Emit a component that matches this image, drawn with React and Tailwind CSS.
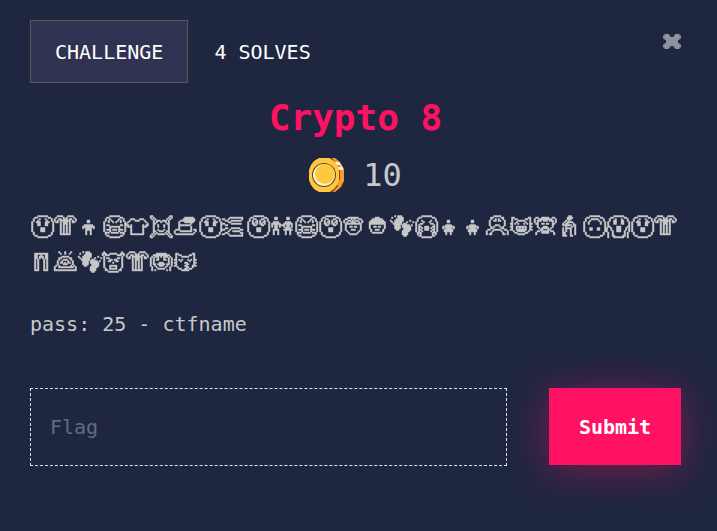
import React from "react";

const ring = [
  "................",
  ".....#######....",
  "...##.......##..",
  "..#...........#.",
  "..#...........#.",
  ".#.............#",
  ".#.............#",
  ".#.............#",
  ".#.............#",
  ".#.............#",
  ".#.............#",
  ".#.............#",
  "..#...........#.",
  "..#...........#.",
  "...##.......##..",
  ".....#######....",
];

// Places an 11x11 set of features inside the round face outline.
function face(features) {
  return ring.map((row, y) =>
    y < 3 || y > 13 || !features[y - 3]
      ? row
      : row.slice(0, 3) + features[y - 3] + row.slice(14)
  );
}

const glyphs = {
  hushed: face([
    "...#...#...",
    "..#.....#..",
    ".###...###.",
    "..##...##..",
    "..##...##..",
    "...........",
    "....###....",
    "....###....",
    "....###....",
  ]),
  astonished: face([
    "..##...##..",
    ".#..#.#..#.",
    ".#.##.#.##.",
    ".##.#.##.#.",
    "..##...##..",
    "...........",
    "....###....",
    "....###....",
    "....###....",
  ]),
  mask: face([
    "..#.....#..",
    ".#.#...#.#.",
    ".#..#.#..#.",
    "...........",
    "##.......##",
    "..#######..",
    "..#.....#..",
    "###.###.###",
    "..#.....#..",
    "##.#####.##",
  ]),
  sob: face([
    "...........",
    "..#.....#..",
    "...#...#...",
    ".##.....##.",
    "#.........#",
    "##..###..##",
    "#.#.###.#.#",
    "##..###..##",
    "#.#.....#.#",
    "##.......##",
    ".#.......#.",
  ]),
  upside: face([
    "...#####...",
    "..#.....#..",
    ".#.......#.",
    ".#.......#.",
    "...........",
    "...........",
    "..##...##..",
    "..##...##..",
  ]),
  scream: [
    "................",
    ".....#######....",
    "...##.......##..",
    "..#...#...#...#.",
    "..#..##...##..#.",
    ".#...##...##...#",
    ".#...##...##...#",
    ".#.............#",
    ".##....###....##",
    "#..#...###...#.#",
    "#..#...###...#.#",
    "#...#..###..#..#",
    ".#..#.......#.#.",
    ".#..#.......#.#.",
    ".#..##.....##.#.",
    ".#...#######..#.",
  ],
  palm: [
    "................",
    "..####...####...",
    ".#....#.#....#..",
    "#..##.###.##..#.",
    "#.#.#######.#.#.",
    ".##.#.###.#.##..",
    "....#.###.#.....",
    "....#.#.#.#.....",
    "....#.#.#.#.....",
    "....#.#.#.#.....",
    "....#.#.#.#.....",
    "....#.#.#.#.....",
    "....#.#.#.#.....",
    "....#######.....",
  ],
  boy: [
    "", "", "", "",
    "......##........",
    "......##........",
    "................",
    "....######......",
    "...########.....",
    "...#.####.#.....",
    ".....####.......",
    ".....#..#.......",
    ".....#..#.......",
    ".....#..#.......",
  ],
  girl: [
    "", "", "", "",
    "......##........",
    "......##........",
    "................",
    ".....####.......",
    "...########.....",
    "...#.####.#.....",
    "....######......",
    "....######......",
    ".....#..#.......",
    ".....#..#.......",
  ],
  shirt: [
    "", "", "",
    "...###...###....",
    "..#...###...#...",
    ".#...........#..",
    "#.............#.",
    "##.#.......#.##.",
    ".###.......###..",
    "...#.......#....",
    "...#.......#....",
    "...#.......#....",
    "...#.......#....",
    "...#########....",
  ],
  bunny: [
    "",
    "##...........##.",
    "#.#.........#.#.",
    ".#.#.......#.#..",
    "..#.###.###.#...",
    "..#.#..#..#.#...",
    "..##.......##...",
    "..#..#...#..#...",
    "..#..#...#..#...",
    "..#.........#...",
    "..#..#...#..#...",
    "..##..###..##...",
    "..#.#.....#.#...",
    ".#.#.#####.#.#..",
    "#.#.........#.#.",
    "##...........##.",
  ],
  hat: [
    "", "",
    ".......######...",
    "......########..",
    "....##########..",
    "...#...######...",
    "...#.......#....",
    "...########.....",
    "...#.......#....",
    "...#.......#....",
    ".###.......#.##.",
    "#...########..#.",
    "#............#..",
    ".############...",
  ],
  clap: [
    "", "",
    ".....#########..",
    "##..#........#..",
    "..##..#######...",
    "....##..........",
    "##....#######...",
    "..##............",
    "................",
    "..##..######....",
    "##...#......##..",
    "....#..#####....",
    "..##........##..",
    "##..#........#..",
    ".....#########..",
  ],
  couple: [
    "", "",
    "...##......##...",
    "...##......##...",
    "................",
    "..####....####..",
    ".######..######.",
    ".#.##.####.##.#.",
    ".#.##.#..#.##.#.",
    "...##.....####..",
    "..####...######.",
    "..#..#....#..#..",
    "..#..#....#..#..",
    "..#..#....#..#..",
  ],
  turban: [
    "", "",
    "....#######.....",
    "..##..#.#..##...",
    ".#..##.#.##..#..",
    ".#.#..###..#.#..",
    "..###########...",
    "..#.........#...",
    "..#..##.##..#...",
    "..#.........#...",
    "..#...###...#...",
    "...#.......#....",
    "....#.....#.....",
    ".....#####......",
  ],
  cap: [
    "", "",
    "......###.......",
    "....#######.....",
    "...#########....",
    "..###########...",
    "..###########...",
    "..#.........#...",
    "..#..##.##..#...",
    "..#.........#...",
    "...#..###..#....",
    "...#.......#....",
    "....#######.....",
  ],
  feet: [
    "",
    "...#.###........",
    ".#...####.......",
    "....#####.......",
    "#..######....#..",
    ".#.#####...#...#",
    "..######.##.....",
    "...####.#####.#.",
    "...####.######..",
    "...####..#####..",
    "....##...#####..",
    "........#####...",
    "........####....",
    "........####....",
    ".........##.....",
  ],
  bust: [
    "",
    ".....#####......",
    "...##.....##....",
    "...#..#.#..#....",
    "..#..##.##..#...",
    "..#.........#...",
    "..#.........#...",
    "..#...###...#...",
    "...#.#...#.#....",
    "...##.....##....",
    ".##..#####..##..",
    "#...#.....#...#.",
    "#..#.......#..#.",
    "#.##.......##.#.",
  ],
  catJoy: [
    "", "",
    ".##.........##..",
    ".#.##.....##.#..",
    ".#...#####...#..",
    ".#..#.....#..#..",
    "##.#.#...#.#.##.",
    ".#...........#..",
    "##..#######..##.",
    ".#..#.#.#.#..#..",
    "##..#######..##.",
    "..#..#####..#...",
    "...##.....##....",
    ".....#####......",
  ],
  monkey: [
    "", "",
    ".##..#####..##..",
    "#..#########..#.",
    "#.###.###.###.#.",
    "#.#.........#.#.",
    ".##..##.##..##..",
    "..#.........#...",
    "..#...###...#...",
    "...#.#####.#....",
    "....##...##.....",
    "..##.#####.##...",
    ".#...#####...#..",
    ".#...........#..",
  ],
  elder: [
    "",
    ".......##.......",
    "......####......",
    "......###.......",
    ".....#.#........",
    "....#.####......",
    "...#.##...#.....",
    "...######.##....",
    ".....#...#.#....",
    "...#.####..#....",
    "...#.#..#..#....",
    "...#.#..#..#....",
    "...##...#..#....",
    "...##...#..#....",
    "...###..##......",
  ],
  jeans: [
    "", "",
    "...#########....",
    "...##..#..##....",
    "...##.###.##....",
    "...##.#.#.##....",
    "...#.#...#.#....",
    "...#.#...#.#....",
    "...#.#...#.#....",
    "...#.#...#.#....",
    "...#.#...#.#....",
    "...#.#...#.#....",
    "...#.#...#.#....",
    "...###...###....",
  ],
  bow: [
    "",
    "...#...#...#....",
    "....#..#..#.....",
    "................",
    ".....#####......",
    "...##.....##....",
    "...#..###..#....",
    "..#..#...#..#...",
    "..#.##.#.##.#...",
    "..#...###...#...",
    ".#.#.......#.#..",
    "#..##########.#.",
    "#.............#.",
    "###############.",
  ],
  ogre: [
    "",
    ".#...........#..",
    "###..#####..###.",
    "#.###.....###.#.",
    ".#...........#..",
    ".#.##.....##.#..",
    ".#...##.##...#..",
    ".#..##...##..#..",
    ".#.....#.....#..",
    ".#...........#..",
    ".#...#####...#..",
    ".#...#...#...#..",
    "..#..#####..#...",
    "..##.......##...",
    "....#######.....",
  ],
  hearNo: [
    "", "",
    "....#######.....",
    "..###########...",
    ".#.###.#.###.#..",
    "#.#..#...#..#.#.",
    "#.#.##...##.#.#.",
    "#.#.........#.#.",
    "#.#...###...#.#.",
    "#.##.#####.##.#.",
    "#..#..###..#..#.",
    ".#..#.....#..#..",
    ".#...#####...#..",
    ".#.#.......#.#..",
  ],
  catKiss: [
    "", "",
    ".##.........##..",
    ".#.##.....##.#..",
    ".#...#####...#..",
    ".#...........#..",
    "##.#.#...#.#.##.",
    ".#..#.....#..#..",
    "##.....##....##.",
    ".#......##...#..",
    "##.....##...###.",
    "..#.....##..#...",
    "...##..##.##....",
    ".....#####......",
  ],
};

const message = [
  "hushed", "palm", "boy", "mask", "shirt", "bunny", "hat", "hushed", "clap",
  "astonished", "couple", "mask", "astonished", "turban", "cap", "feet", "sob",
  "girl", "girl", "bust", "catJoy", "monkey", "elder", "upside", "scream",
  "hushed", "palm", "jeans", "bow", "feet", "ogre", "palm", "hearNo", "catKiss",
];

function toPath(rows) {
  let d = "";
  rows.forEach((row, y) => {
    for (const run of row.matchAll(/#+/g)) {
      d += `M${run.index} ${y}h${run[0].length}v1h-${run[0].length}z`;
    }
  });
  return d;
}

function PixelEmoji({ name }) {
  return (
    <svg
      viewBox="0 0 16 16"
      className="size-6 shrink-0 overflow-visible"
      fill="currentColor"
      stroke="currentColor"
      strokeWidth="0.3"
      aria-hidden="true"
    >
      <path d={toPath(glyphs[name])} />
    </svg>
  );
}

function Coin() {
  return (
    <svg viewBox="0 0 36 34" className="h-[34px] w-9" aria-hidden="true">
      <path d="M14 0h12l5 4 4 7v12l-3 6-6 5H14z" fill="#f89a2c" />
      <path d="M20 0h3l6 7-2 1zM29 12h2v10h-2zM21 34l7-8 1 2-5 6z" fill="#7d4a2a" />
      <path d="M26 4h4l4 6v2h-4z" fill="#fff4df" />
      <path d="M28 7h3l1 2h-3z" fill="#e98a3c" />
      <path d="M10 0h10l5 3 3 4 2 5v10l-2 5-3 4-5 3H10l-5-3-3-4-2-5V12l2-5 3-4z" fill="#ffc83e" />
      <circle cx="15" cy="17" r="12" fill="#59451f" />
      <circle cx="15" cy="17" r="11" fill="#fff0cd" />
      <circle cx="16" cy="16" r="10" fill="#ffc83e" />
    </svg>
  );
}

export default function App() {
  return (
    <main className="min-h-screen bg-[#1f2640] pt-5 pr-9 pb-16 pl-[30px] font-['DejaVu_Sans_Mono',monospace] text-xl text-[#c8c8c8]">
      <header className="flex items-start justify-between">
        <nav className="flex gap-px text-white">
          <button type="button" className="h-[63px] border border-[#5b5954] bg-[#2f3250] px-6">
            CHALLENGE
          </button>
          <button type="button" className="h-[63px] border border-transparent px-6">
            4 SOLVES
          </button>
        </nav>
        <button type="button" aria-label="Close" className="mt-3.5 text-[#8f92a0]">
          <svg viewBox="0 0 12 10" className="h-[15px] w-[18px]" fill="currentColor" aria-hidden="true">
            <path d="M1 0h3v1h1v1h2V1h1V0h3v1h1v2h-1v1h-1v2h1v1h1v2h-1v1H8V9H7V8H5v1H4v1H1V9H0V7h1V6h1V4H1V3H0V1h1z" />
          </svg>
        </button>
      </header>

      <h1 className="mt-[11px] text-center text-4xl leading-[48px] font-bold text-[#ff1164]">Crypto 8</h1>

      <div className="mt-[15px] flex h-9 items-center justify-center gap-[18px] text-[32px] font-light">
        <Coin />
        <span>10</span>
      </div>

      <div role="img" aria-label="Emoji cipher text" className="mt-[21px] flex flex-wrap gap-y-3">
        {message.map((name, i) => (
          <PixelEmoji key={i} name={name} />
        ))}
      </div>

      <p className="mt-8 leading-9">pass: 25 - ctfname</p>

      <form className="mt-[46px] flex gap-[42px]" onSubmit={(e) => e.preventDefault()}>
        <input
          type="text"
          aria-label="Flag"
          placeholder="Flag"
          className="h-[78px] min-w-0 flex-1 border border-dashed border-[#dce6e6] bg-transparent px-[19px] outline-none placeholder:text-[#646c78]"
        />
        <button
          type="submit"
          className="h-[77px] w-[132px] bg-[#ff1164] font-bold text-white shadow-[0_5px_40px_rgba(255,17,100,0.4)]"
        >
          Submit
        </button>
      </form>
    </main>
  );
}
